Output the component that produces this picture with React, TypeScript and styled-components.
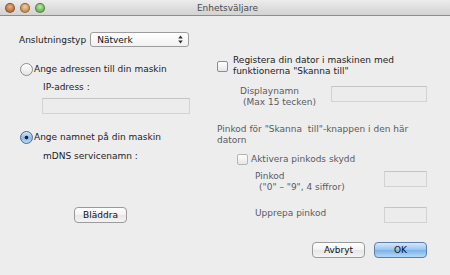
import React from 'react';
import styled, { createGlobalStyle } from 'styled-components';

const GlobalStyle = createGlobalStyle`
  html, body {
    margin: 0;
    padding: 0;
    background: #ededed;
  }
  body {
    font-family: "DejaVu Sans", "Lucida Grande", sans-serif;
    font-size: 9px;
    color: #1c1c24;
  }
`;

const Window = styled.div`
  width: 450px;
  height: 275px;
  background: #ededed;
  overflow: hidden;
  display: flex;
  flex-direction: column;
`;

const TitleBar = styled.div`
  height: 15px;
  display: flex;
  align-items: center;
  background: linear-gradient(#ececec, #d2d2d2);
  border-bottom: 1px solid #8e8e8e;
`;

const Lights = styled.div`
  display: flex;
  gap: 5px;
  padding-left: 5px;
`;

const Light = styled.span<{ $c1: string; $c2: string }>`
  width: 10px;
  height: 10px;
  border-radius: 50%;
  box-sizing: border-box;
  border: 1px solid rgba(90, 60, 30, 0.55);
  background: radial-gradient(circle at 50% 35%, ${(p) => p.$c1}, ${(p) => p.$c2} 75%);
`;

const Title = styled.div`
  flex: 1;
  text-align: center;
  color: #4a4a4a;
  margin-right: 40px;
  margin-top: 1px;
`;

const Body = styled.div`
  padding: 16px 0 0 19px;
  display: flex;
  flex-direction: column;
`;

const TypeRow = styled.div`
  display: flex;
  align-items: center;
  gap: 4px;
  height: 15px;
`;

const Select = styled.div`
  width: 99px;
  height: 15px;
  box-sizing: border-box;
  border: 1px solid #9c9c9c;
  border-radius: 3px;
  background: linear-gradient(#ffffff, #f1f1f1);
  display: flex;
  align-items: center;
  justify-content: space-between;
  padding: 0 5px 0 6px;
  color: #111;
`;

const Columns = styled.div`
  display: grid;
  grid-template-columns: 198px 210px;
  margin-top: 9px;
`;

const Col = styled.div`
  display: flex;
  flex-direction: column;
  align-items: flex-start;
`;

const OptionRow = styled.label<{ $mt: number; $ml?: number }>`
  display: flex;
  align-items: center;
  gap: 1px;
  margin-top: ${(p) => p.$mt}px;
  margin-left: ${(p) => p.$ml ?? 0}px;
  line-height: 11px;
`;

const Radio = styled.span<{ $on?: boolean }>`
  width: 13px;
  height: 13px;
  box-sizing: border-box;
  border-radius: 50%;
  border: 1px solid ${(p) => (p.$on ? '#4b6a92' : '#8d8d8d')};
  background: ${(p) =>
    p.$on
      ? 'radial-gradient(circle, #1d2533 0 1.6px, transparent 2.2px), linear-gradient(#d3e6f8, #8cbbe9 55%, #b9d9f6)'
      : 'linear-gradient(#ffffff, #e4e4e4)'};
`;

const Check = styled.span<{ $dim?: boolean }>`
  width: 11px;
  height: 11px;
  flex: none;
  box-sizing: border-box;
  border-radius: 2px;
  border: 1px solid ${(p) => (p.$dim ? '#b5b5b5' : '#8d8d8d')};
  background: linear-gradient(#ffffff, #e6e6e6);
`;

const Label = styled.div<{ $mt?: number; $ml?: number; $dim?: boolean }>`
  line-height: 11px;
  margin-top: ${(p) => p.$mt ?? 0}px;
  margin-left: ${(p) => p.$ml ?? 0}px;
  color: ${(p) => (p.$dim ? '#5a5a62' : 'inherit')};
`;

const Field = styled.div<{ $w: number; $mt?: number; $ml?: number }>`
  width: ${(p) => p.$w}px;
  height: 16px;
  box-sizing: border-box;
  margin-top: ${(p) => p.$mt ?? 0}px;
  margin-left: ${(p) => p.$ml ?? 0}px;
  border: 1px solid #d2d2d2;
  border-top-color: #c4c4c4;
  background: #ececec;
  flex: none;
`;

const Button = styled.button<{ $primary?: boolean; $mt?: number; $ml?: number }>`
  width: 53px;
  height: 16px;
  margin-top: ${(p) => p.$mt ?? 0}px;
  margin-left: ${(p) => p.$ml ?? 0}px;
  padding: 0;
  box-sizing: border-box;
  font-family: inherit;
  font-size: 9px;
  color: #111;
  border-radius: 4px;
  border: 1px solid ${(p) => (p.$primary ? '#5d7ea8' : '#9a9a9a')};
  background: ${(p) =>
    p.$primary
      ? 'linear-gradient(#d6e8fa, #98c3ee 50%, #7cb2e8 51%, #b4d8f8)'
      : 'linear-gradient(#ffffff, #f2f2f2 50%, #e6e6e6 51%, #f4f4f4)'};
`;

const RegRow = styled.label`
  display: flex;
  align-items: center;
  gap: 5px;
  line-height: 11px;
  margin-top: -1px;
`;

const FieldRow = styled.div<{ $mt: number; $ml: number }>`
  display: flex;
  justify-content: space-between;
  align-items: flex-start;
  width: ${(p) => 210 - p.$ml}px;
  margin-top: ${(p) => p.$mt}px;
  margin-left: ${(p) => p.$ml}px;
`;

const Indent = styled.span<{ $w: number }>`
  display: inline-block;
  width: ${(p) => p.$w}px;
`;

const Actions = styled.div`
  display: flex;
  gap: 9px;
  align-self: flex-end;
  margin-top: 19px;
`;

const UpDown = () => (
  <svg width="5" height="9" viewBox="0 0 5 9">
    <path d="M2.5 0.5 L4.8 3.5 H0.2 Z M2.5 8.5 L4.8 5.5 H0.2 Z" fill="#333" />
  </svg>
);

export default function App() {
  return (
    <Window>
      <GlobalStyle />
      <TitleBar>
        <Lights>
          <Light $c1="#e9b58a" $c2="#b86a30" />
          <Light $c1="#f3cfa5" $c2="#c98a4e" />
          <Light $c1="#b8ecaa" $c2="#5fb350" />
        </Lights>
        <Title>Enhetsväljare</Title>
      </TitleBar>
      <Body>
        <TypeRow>
          <span>Anslutningstyp</span>
          <Select>
            <span>Nätverk</span>
            <UpDown />
          </Select>
        </TypeRow>
        <Columns>
          <Col>
            <OptionRow $mt={7} $ml={1}>
              <Radio />
              <span>Ange adressen till din maskin</span>
            </OptionRow>
            <Label $mt={6} $ml={24}>IP-adress :</Label>
            <Field $w={148} $mt={5} $ml={23} />
            <OptionRow $mt={17} $ml={1}>
              <Radio $on />
              <span>Ange namnet på din maskin</span>
            </OptionRow>
            <Label $mt={7} $ml={24}>mDNS servicenamn :</Label>
            <Button $mt={45} $ml={55}>Bläddra</Button>
          </Col>
          <Col>
            <RegRow>
              <Check />
              <span>
                Registera din dator i maskinen med
                <br />
                funktionerna "Skanna till"
              </span>
            </RegRow>
            <FieldRow $mt={9} $ml={23}>
              <Label $dim>
                Displaynamn
                <br />
                <Indent $w={3} />(Max 15 tecken)
              </Label>
              <Field $w={96} />
            </FieldRow>
            <Label $mt={16} $dim>
              Pinkod för "Skanna&nbsp; till"-knappen i den här
              <br />
              datorn
            </Label>
            <OptionRow $mt={8} $ml={20}>
              <Check $dim />
              <Label $ml={2} $dim>Aktivera pinkods skydd</Label>
            </OptionRow>
            <FieldRow $mt={6} $ml={38}>
              <Label $dim>
                Pinkod
                <br />
                <Indent $w={4} />("0" – "9", 4 siffror)
              </Label>
              <Field $w={43} />
            </FieldRow>
            <FieldRow $mt={14} $ml={38}>
              <Label $mt={1} $dim>Upprepa pinkod</Label>
              <Field $w={43} />
            </FieldRow>
            <Actions>
              <Button>Avbryt</Button>
              <Button $primary>OK</Button>
            </Actions>
          </Col>
        </Columns>
      </Body>
    </Window>
  );
}
